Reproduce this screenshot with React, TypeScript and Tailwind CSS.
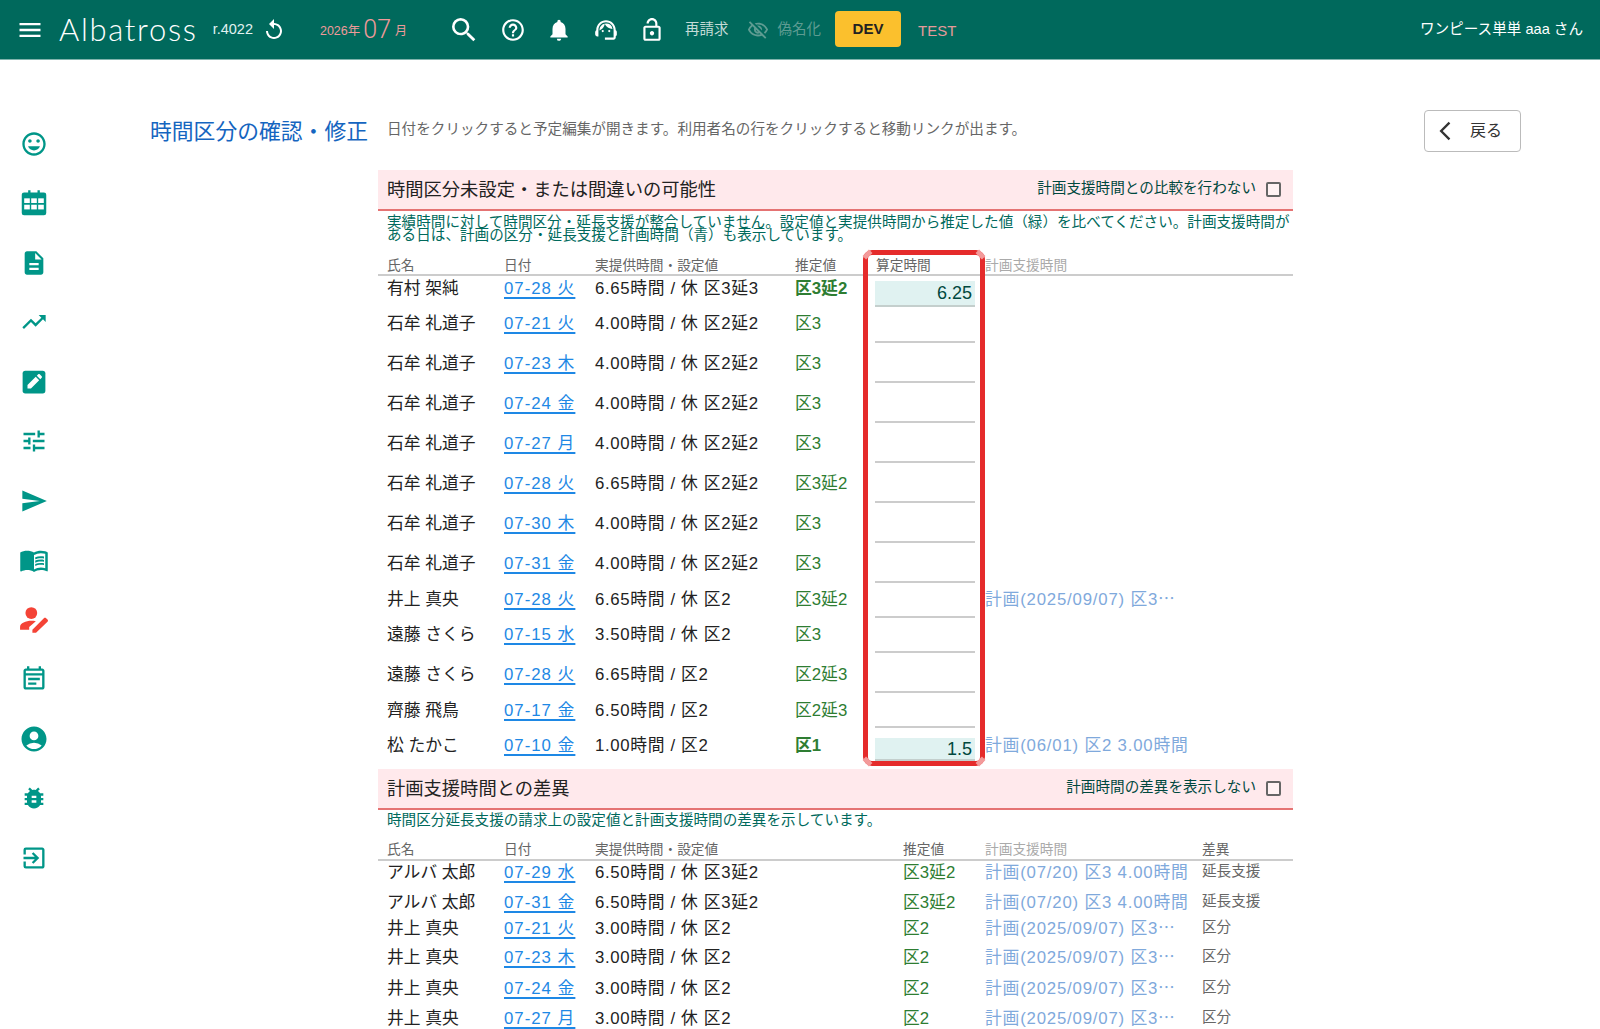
import {
  MdMenu,
  MdReplay,
  MdSearch,
  MdHelpOutline,
  MdNotifications,
  MdOutlineSupportAgent,
  MdOutlineLockOpen,
  MdOutlineVisibilityOff,
  MdArrowBackIosNew,
  MdOutlineInsertEmoticon,
  MdDescription,
  MdTrendingUp,
  MdTune,
  MdSend,
  MdMenuBook,
  MdOutlineEventNote,
  MdAccountCircle,
  MdBugReport,
  MdOutlineExitToApp,
} from 'react-icons/md';

const font = { fontFamily: '"Liberation Sans", "Noto Sans CJK JP", sans-serif' };

interface CheckRow {
  name: string;
  date: string;
  actual: string;
  est: string;
  bold?: boolean;
  calc?: string;
  calcH?: number;
  calcPb?: number;
  plan?: string;
  h: number;
  dy: number;
}

const checkRows: CheckRow[] = [
  { name: '有村 架純', date: '07-28 火', actual: '6.65時間 / 休 区3延3', est: '区3延2', bold: true, calc: '6.25', calcH: 26, calcPb: 2, h: 31, dy: 0 },
  { name: '石牟 礼道子', date: '07-21 火', actual: '4.00時間 / 休 区2延2', est: '区3', h: 36, dy: 1 },
  { name: '石牟 礼道子', date: '07-23 木', actual: '4.00時間 / 休 区2延2', est: '区3', h: 40, dy: 3 },
  { name: '石牟 礼道子', date: '07-24 金', actual: '4.00時間 / 休 区2延2', est: '区3', h: 40, dy: 3 },
  { name: '石牟 礼道子', date: '07-27 月', actual: '4.00時間 / 休 区2延2', est: '区3', h: 40, dy: 3 },
  { name: '石牟 礼道子', date: '07-28 火', actual: '6.65時間 / 休 区2延2', est: '区3延2', h: 40, dy: 3 },
  { name: '石牟 礼道子', date: '07-30 木', actual: '4.00時間 / 休 区2延2', est: '区3', h: 40, dy: 3 },
  { name: '石牟 礼道子', date: '07-31 金', actual: '4.00時間 / 休 区2延2', est: '区3', h: 40, dy: 3 },
  { name: '井上 真央', date: '07-28 火', actual: '6.65時間 / 休 区2', est: '区3延2', plan: '計画(2025/09/07) 区3⋯', h: 35, dy: 2 },
  { name: '遠藤 さくら', date: '07-15 水', actual: '3.50時間 / 休 区2', est: '区3', h: 35, dy: 2 },
  { name: '遠藤 さくら', date: '07-28 火', actual: '6.65時間 / 区2', est: '区2延3', h: 40, dy: 4 },
  { name: '齊藤 飛鳥', date: '07-17 金', actual: '6.50時間 / 区2', est: '区2延3', h: 35, dy: 3 },
  { name: '松 たかこ', date: '07-10 金', actual: '1.00時間 / 区2', est: '区1', bold: true, calc: '1.5', calcH: 23, calcPb: 0, plan: '計画(06/01) 区2 3.00時間', h: 33, dy: 4 },
];

const diffRows = [
  { name: 'アルバ 太郎', date: '07-29 水', actual: '6.50時間 / 休 区3延2', est: '区3延2', plan: '計画(07/20) 区3 4.00時間', diff: '延長支援', h: 29, up: 3 },
  { name: 'アルバ 太郎', date: '07-31 金', actual: '6.50時間 / 休 区3延2', est: '区3延2', plan: '計画(07/20) 区3 4.00時間', diff: '延長支援', h: 29, up: 2 },
  { name: '井上 真央', date: '07-21 火', actual: '3.00時間 / 休 区2', est: '区2', plan: '計画(2025/09/07) 区3⋯', diff: '区分', h: 27, up: 4 },
  { name: '井上 真央', date: '07-23 木', actual: '3.00時間 / 休 区2', est: '区2', plan: '計画(2025/09/07) 区3⋯', diff: '区分', h: 30, up: 3 },
  { name: '井上 真央', date: '07-24 金', actual: '3.00時間 / 休 区2', est: '区2', plan: '計画(2025/09/07) 区3⋯', diff: '区分', h: 30, up: 2 },
  { name: '井上 真央', date: '07-27 月', actual: '3.00時間 / 休 区2', est: '区2', plan: '計画(2025/09/07) 区3⋯', diff: '区分', h: 30, up: 2 },
];

function PersonEdit() {
  return (
    <svg viewBox="0 0 28 28" className="w-[30px] h-[30px]" fill="#f44336">
      <circle cx="11.5" cy="7.5" r="5.5" />
      <path d="M1 23v-2.5c0-3.6 5.5-5.8 10.5-5.8 1.4 0 2.8.15 4.2.45L9.5 20.5V23H1z" />
      <path d="M12.5 26v-3l10.7-10.7c.6-.6 1.5-.6 2.1 0l1.3 1.3c.6.6.6 1.5 0 2.1L15.9 26h-3.4z" />
    </svg>
  );
}

function CalendarGrid() {
  return (
    <svg viewBox="0 0 24 24" className="w-[28px] h-[28px]" fill="currentColor">
      <path d="M7 1h2v3H7zM15 1h2v3h-2z" />
      <rect x="1.5" y="3" width="21" height="19.5" rx="2" />
      <g fill="#fff">
        <rect x="3.6" y="8" width="4.8" height="4" />
        <rect x="9.6" y="8" width="4.8" height="4" />
        <rect x="15.6" y="8" width="4.8" height="4" />
        <rect x="3.6" y="13.5" width="4.8" height="4" />
        <rect x="9.6" y="13.5" width="4.8" height="4" />
        <rect x="15.6" y="13.5" width="4.8" height="4" />
      </g>
    </svg>
  );
}

function EditBox() {
  return (
    <svg viewBox="0 0 24 24" className="w-[26px] h-[26px]" fill="currentColor">
      <rect x="1.5" y="1.5" width="21" height="21" rx="2.5" />
      <path fill="#fff" d="M6 18v-3.2l7.6-7.6 3.2 3.2L9.2 18H6zM14.6 6.2l1.3-1.3c.4-.4 1-.4 1.4 0l1.8 1.8c.4.4.4 1 0 1.4l-1.3 1.3-3.2-3.2z" />
    </svg>
  );
}

function Checkbox() {
  return <span className="w-[15px] h-[15px] border-2 border-[#666] rounded-[2px] shrink-0 bg-white/40" />;
}

function SectionHeader({ title, label }: { title: string; label: string }) {
  return (
    <div className="h-[41px] bg-[#ffe9ec] border-b-2 border-[#e57373] flex items-center pl-[9px] pr-[12px]">
      <span className="text-[18.3px] text-[#222]">{title}</span>
      <span className="ml-auto text-[14.6px] text-[#00483e] mr-[10px] -mt-[1px]">{label}</span>
      <Checkbox />
    </div>
  );
}

function DateLink({ children }: { children: string }) {
  return <a className="text-[#1e88e5] underline underline-offset-[3px] decoration-[1.5px] tracking-[1px]">{children}</a>;
}

export default function App() {
  const sideIcons = [
    <MdOutlineInsertEmoticon size={28} />,
    <CalendarGrid />,
    <MdDescription size={28} />,
    <MdTrendingUp size={28} />,
    <EditBox />,
    <MdTune size={28} />,
    <MdSend size={28} />,
    <MdMenuBook size={30} />,
    <PersonEdit />,
    <MdOutlineEventNote size={28} />,
    <MdAccountCircle size={30} />,
    <MdBugReport size={28} />,
    <MdOutlineExitToApp size={28} />,
  ];

  return (
    <div className="h-screen overflow-hidden bg-white text-[#222]" style={font}>
      {/* top bar */}
      <header className="h-[60px] bg-[#00695c] border-b border-[#80b4ad] flex items-center text-white">
        <MdMenu size={28} className="ml-[16px]" />
        <span className="ml-[15px] text-[31px] font-light tracking-[1.7px] leading-none" style={{ fontFamily: 'Lato, sans-serif' }}>
          Albatross
        </span>
        <span className="ml-[15px] text-[14.5px] text-[#e0f2f1]">r.4022</span>
        <MdReplay size={24} className="ml-[9px]" />
        <span className="ml-[34px] text-[12.5px] text-[#ef9a9a] mt-[3px]">2026年</span>
        <span className="ml-[3px] text-[25px] text-[#ef9a9a] font-light leading-none" style={{ fontFamily: 'Roboto, sans-serif' }}>07</span>
        <span className="ml-[4px] text-[12px] text-[#ef9a9a] mt-[3px]">月</span>
        <MdSearch size={32} className="ml-[41px]" />
        <MdHelpOutline size={26} className="ml-[20px]" />
        <MdNotifications size={26} className="ml-[20px]" />
        <MdOutlineSupportAgent size={26} className="ml-[21px]" />
        <MdOutlineLockOpen size={26} className="ml-[20px]" />
        <span className="ml-[20px] text-[14.5px] text-[#c5dcd8]">再請求</span>
        <MdOutlineVisibilityOff size={22} className="ml-[18px] text-[#5e9c92]" />
        <span className="ml-[9px] text-[14.5px] text-[#5e9c92]">偽名化</span>
        <button className="ml-[14px] w-[66px] h-[36px] mb-[1px] bg-[#fbc02d] rounded-[4px] text-[15px] font-bold text-[#222]">DEV</button>
        <span className="ml-[17px] mt-[3px] text-[15px] text-[#e59a9a]">TEST</span>
        <span className="ml-auto mr-[17px] text-[14.6px] text-white">ワンピース単単 aaa さん</span>
      </header>

      <div className="flex">
        {/* side nav */}
        <nav className="w-[68px] shrink-0 pt-[54px] flex flex-col text-[#009688]">
          {sideIcons.map((icon, i) => (
            <div key={i} className="h-[59.5px] flex items-center justify-center">
              {icon}
            </div>
          ))}
        </nav>

        <main className="flex-1 pl-[82px] pr-[79px] pt-[50px]">
          <div className="flex items-center h-[42px]">
            <h1 className="w-[237px] pt-[2px] text-[21.8px] text-[#1565c0] shrink-0">時間区分の確認・修正</h1>
            <p className="text-[14.6px] text-[#666] -mt-[2px]">日付をクリックすると予定編集が開きます。利用者名の行をクリックすると移動リンクが出ます。</p>
            <button className="ml-auto w-[97px] h-[42px] border border-[#bbb] rounded-[4px] flex items-center pl-[9px] text-[16px] text-[#333]">
              <MdArrowBackIosNew size={22} />
              <span className="ml-[14px] -mt-[1px]">戻る</span>
            </button>
          </div>

          <section className="ml-[228px] w-[915px] mt-[18px]">
            <SectionHeader title="時間区分未設定・または間違いの可能性" label="計画支援時間との比較を行わない" />
            <p className="pl-[9px] pt-[5px] text-[14.6px] leading-[13px] text-[#00695c] whitespace-nowrap">
              実績時間に対して時間区分・延長支援が整合していません。設定値と実提供時間から推定した値（緑）を比べてください。計画支援時間が
              <br />
              ある日は、計画の区分・延長支援と計画時間（青）も表示しています。
            </p>

            <div className="relative mt-[12px]">
              <div className="h-[22px] pt-[5px] border-b-2 border-[#ccc] flex items-center text-[13.7px] text-[#666]">
                <span className="w-[126px] pl-[9px]">氏名</span>
                <span className="w-[91px]">日付</span>
                <span className="w-[200px]">実提供時間・設定値</span>
                <span className="w-[81px]">推定値</span>
                <span className="w-[109px]">算定時間</span>
                <span className="text-[#aaa]">計画支援時間</span>
              </div>

              {checkRows.map((r, i) => {
                const pad = { paddingTop: r.dy * 2 };
                return (
                  <div key={i} className="flex items-center text-[16.8px]" style={{ height: r.h }}>
                    <span className="w-[126px] pl-[9px] pb-[5px]" style={pad}>{r.name}</span>
                    <span className="w-[91px] pb-[5px]" style={pad}>
                      <DateLink>{r.date}</DateLink>
                    </span>
                    <span className="w-[200px] pb-[5px] whitespace-nowrap tracking-[0.65px]" style={pad}>{r.actual}</span>
                    <span className={`w-[80px] pb-[5px] text-[#2e7d32] ${r.bold ? 'font-bold' : ''}`} style={pad}>{r.est}</span>
                    <div className="w-[110px] self-stretch flex flex-col justify-end">
                      {r.calc ? (
                        <div
                          className="w-[100px] bg-[#e0f2f1] border-b-2 border-[#c4cfcd] flex items-end justify-end pr-[3px] text-[18px] leading-[20px] text-[#00483e]"
                          style={{ height: r.calcH, paddingBottom: r.calcPb }}
                        >
                          {r.calc}
                        </div>
                      ) : (
                        <div className="w-[100px] border-b-2 border-[#ccc]" />
                      )}
                    </div>
                    {r.plan && <span className="pb-[5px] whitespace-nowrap tracking-[0.8px] text-[#7fa9dc]" style={pad}>{r.plan}</span>}
                  </div>
                );
              })}

              {/* 赤枠の注釈 */}
              <div className="absolute left-[485px] top-[-4px] w-[122px] h-[516px] border-[5px] border-[#e52b2b] rounded-[9px] pointer-events-none">
                <span className="absolute left-[-5px] top-[-3px] w-[9px] h-[5px] bg-[#f39a9a] -rotate-45" />
                <span className="absolute right-[-5px] top-[-3px] w-[9px] h-[5px] bg-[#f39a9a] rotate-45" />
                <span className="absolute left-[-5px] bottom-[-3px] w-[9px] h-[5px] bg-[#f39a9a] rotate-45" />
                <span className="absolute right-[-5px] bottom-[-3px] w-[9px] h-[5px] bg-[#f39a9a] -rotate-45" />
              </div>
            </div>

            <div className="mt-[8px]">
              <SectionHeader title="計画支援時間との差異" label="計画時間の差異を表示しない" />
            </div>
            <p className="pl-[9px] pt-[2px] text-[14.6px] leading-[16px] text-[#00695c]">時間区分延長支援の請求上の設定値と計画支援時間の差異を示しています。</p>

            <div className="mt-[11px] h-[22px] pt-[3px] border-b-2 border-[#ccc] flex items-center text-[13.7px] text-[#666]">
              <span className="w-[126px] pl-[9px]">氏名</span>
              <span className="w-[91px]">日付</span>
              <span className="w-[308px]">実提供時間・設定値</span>
              <span className="w-[82px]">推定値</span>
              <span className="w-[217px] text-[#aaa]">計画支援時間</span>
              <span>差異</span>
            </div>

            {diffRows.map((r, i) => {
              const pad = { paddingBottom: r.up * 2 };
              return (
                <div key={i} className="flex items-center text-[16.8px]" style={{ height: r.h }}>
                  <span className="w-[126px] pl-[9px]" style={pad}>{r.name}</span>
                  <span className="w-[91px]" style={pad}>
                    <DateLink>{r.date}</DateLink>
                  </span>
                  <span className="w-[308px] whitespace-nowrap tracking-[0.65px]" style={pad}>{r.actual}</span>
                  <span className="w-[82px] text-[#2e7d32]" style={pad}>{r.est}</span>
                  <span className="w-[217px] whitespace-nowrap tracking-[0.8px] text-[#7fa9dc]" style={pad}>{r.plan}</span>
                  <span className="text-[14.6px] text-[#666] -mt-[2px]" style={pad}>{r.diff}</span>
                </div>
              );
            })}
          </section>
        </main>
      </div>
    </div>
  );
}
